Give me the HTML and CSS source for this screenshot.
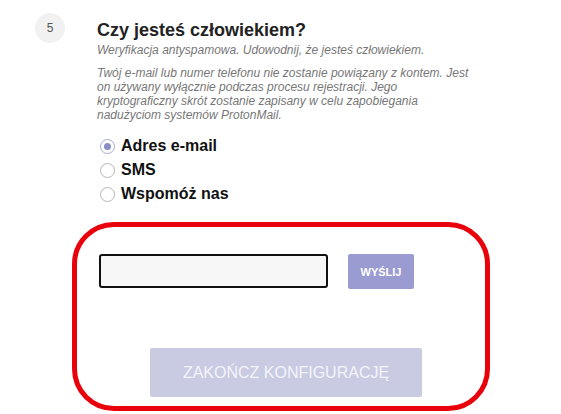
FILE: index.html
```html
<!DOCTYPE html>
<html lang="pl">
<head>
<meta charset="utf-8">
<title>Czy jesteś człowiekiem?</title>
<link rel="stylesheet" href="styles.css">
</head>
<body>
<div class="step">
  <div class="badge">5</div>
  <div class="content">
    <h2 class="title">Czy jesteś człowiekiem?</h2>
    <p class="subtitle">Weryfikacja antyspamowa. Udowodnij, że jesteś człowiekiem.</p>
    <p class="note">Twój e-mail lub numer telefonu nie zostanie powiązany z kontem. Jest<br>on używany wyłącznie podczas procesu rejestracji. Jego<br>kryptograficzny skrót zostanie zapisany w celu zapobiegania<br>nadużyciom systemów ProtonMail.</p>
    <div class="options">
      <label class="option"><span class="radio checked"></span><span>Adres e-mail</span></label>
      <label class="option"><span class="radio"></span><span>SMS</span></label>
      <label class="option"><span class="radio"></span><span>Wspomóż nas</span></label>
    </div>
    <div class="send-row">
      <div class="field"></div>
      <button class="send">WYŚLIJ</button>
    </div>
    <div class="finish-row">
      <button class="finish">ZAKOŃCZ KONFIGURACJĘ</button>
    </div>
  </div>
</div>
<div class="highlight"></div>
</body>
</html>
```

FILE: styles.css
```css
html, body {
  margin: 0;
  padding: 0;
  background: #ffffff;
}

body {
  width: 561px;
  height: 414px;
  overflow: hidden;
  position: relative;
  font-family: "Liberation Sans", Arial, sans-serif;
  color: #222;
}

.step {
  display: flex;
  align-items: flex-start;
  padding: 13px 0 0 35px;
}

.badge {
  width: 30px;
  height: 30px;
  border-radius: 50%;
  background: #f1f1f1;
  color: #555;
  font-size: 12px;
  display: flex;
  align-items: center;
  justify-content: center;
  flex: none;
}

.content {
  margin-left: 32px;
  padding-top: 7px;
}

.title {
  margin: 0;
  font-size: 18px;
  line-height: 20px;
  font-weight: bold;
  color: #222;
}

.subtitle {
  margin: 3px 0 0;
  font-size: 12px;
  line-height: 14px;
  font-style: italic;
  color: #777;
}

.note {
  margin: 9px 0 0;
  font-size: 12px;
  line-height: 14px;
  font-style: italic;
  color: #777;
}

.options {
  margin-top: 12px;
  padding-left: 3px;
  display: flex;
  flex-direction: column;
}

.option {
  display: flex;
  align-items: center;
  gap: 6px;
  height: 24px;
  font-size: 16px;
  font-weight: bold;
  color: #111;
}

.radio {
  width: 15px;
  height: 15px;
  box-sizing: border-box;
  border: 1px solid #b5b5b5;
  border-radius: 50%;
  background: #fff;
  display: flex;
  align-items: center;
  justify-content: center;
  flex: none;
}

.radio.checked {
  border-color: #a9a9cf;
}

.radio.checked::after {
  content: "";
  width: 7px;
  height: 7px;
  border-radius: 50%;
  background: #8b8bc6;
}

.send-row {
  display: flex;
  align-items: flex-start;
  gap: 20px;
  margin-top: 48px;
  padding-left: 2px;
}

.field {
  width: 229px;
  height: 34px;
  box-sizing: border-box;
  border: 2px solid #111;
  border-radius: 3px;
  background: #f7f7f7;
}

.send {
  width: 66px;
  height: 35px;
  border: none;
  border-radius: 2px;
  background: #9a9bd0;
  color: #fff;
  font-family: "Liberation Sans", Arial, sans-serif;
  font-size: 11px;
  font-weight: bold;
  padding: 0;
}

.finish-row {
  margin-top: 59px;
  padding-left: 53px;
}

.finish {
  width: 272px;
  height: 49px;
  border: none;
  border-radius: 2px;
  background: #c9cbe2;
  color: #f4f4fa;
  font-family: "Liberation Sans", Arial, sans-serif;
  font-size: 16px;
  padding: 0;
}

.highlight {
  position: absolute;
  left: 72px;
  top: 222px;
  width: 418px;
  height: 189px;
  box-sizing: border-box;
  border: 5px solid #e8000a;
  border-radius: 42px;
  pointer-events: none;
}
```
